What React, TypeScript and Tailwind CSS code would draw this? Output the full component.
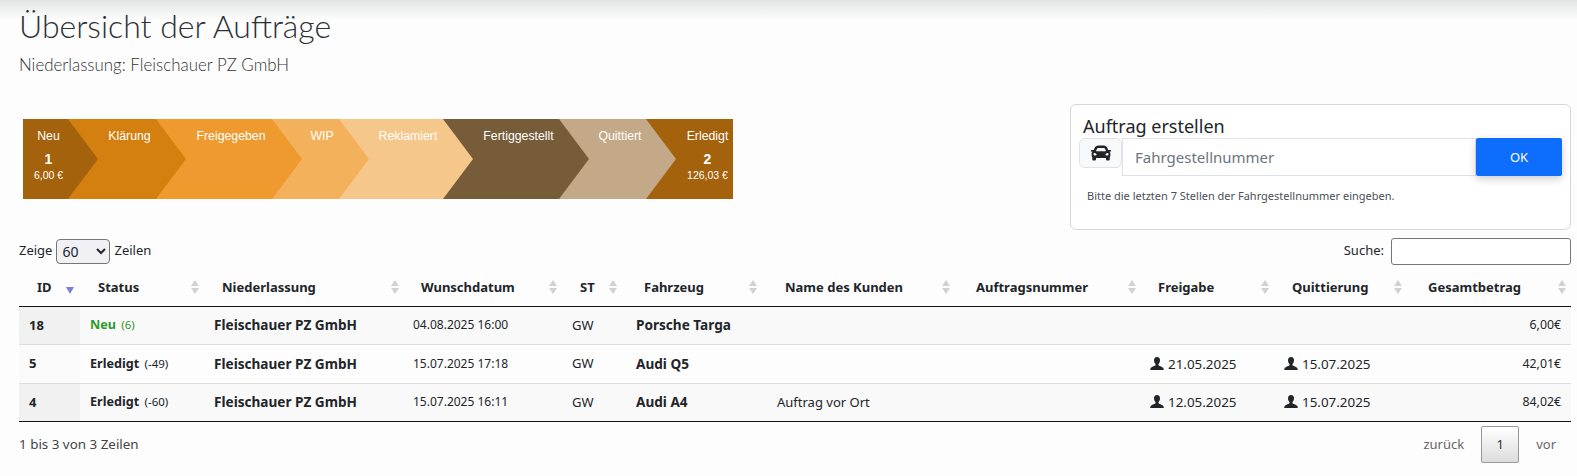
import { FaCar } from "react-icons/fa";

const stages = [
  { label: "Neu", color: "bg-[#a4620c]", box: "w-[45px] pl-[6px]", tip: "bg-[#a4620c]", count: "1", sum: "6,00 €" },
  { label: "Klärung", color: "bg-[#d38010]", box: "w-[88px] pl-[35px]", tip: "bg-[#d38010]" },
  { label: "Freigegeben", color: "bg-[#ee9a2e]", box: "w-[116px] pl-[34px]", tip: "bg-[#ee9a2e]" },
  { label: "WIP", color: "bg-[#f3b15b]", box: "w-[67px] pl-[33px]", tip: "bg-[#f3b15b]" },
  { label: "Reklamiert", color: "bg-[#f5c78a]", box: "w-[104px] pl-[34px]", tip: "bg-[#f5c78a]" },
  { label: "Fertiggestellt", color: "bg-[#775c3a]", box: "w-[116px] pl-[35px]", tip: "bg-[#775c3a]" },
  { label: "Quittiert", color: "bg-[#c3a987]", box: "w-[87px] pl-[35px]", tip: "bg-[#c3a987]" },
  { label: "Erledigt", color: "bg-[#a4620c]", box: "w-[87px] pl-[36px]", count: "2", sum: "126,03 €" },
];

const columns = [
  { label: "ID", width: "w-[61px]", sort: "right-[5px]", active: true },
  { label: "Status", width: "w-[124px]", sort: "right-[4px]" },
  { label: "Niederlassung", width: "w-[199px]", sort: "right-[3px]" },
  { label: "Wunschdatum", width: "w-[159px]", sort: "right-[4px]" },
  { label: "ST", width: "w-[64px]", sort: "right-[8px]" },
  { label: "Fahrzeug", width: "w-[141px]", sort: "right-[9px]" },
  { label: "Name des Kunden", width: "w-[191px]", sort: "right-[7px]" },
  { label: "Auftragsnummer", width: "w-[182px]", sort: "right-[3px]" },
  { label: "Freigabe", width: "w-[134px]", sort: "right-[4px]" },
  { label: "Quittierung", width: "w-[136px]", sort: "right-[7px]" },
  { label: "Gesamtbetrag", width: "w-[161px]", sort: "right-[4px]" },
];

const rows = [
  { id: "18", status: "Neu", days: "(6)", isNew: true, date: "04.08.2025 16:00", car: "Porsche Targa", customer: "", release: "", receipt: "", total: "6,00€", odd: true },
  { id: "5", status: "Erledigt", days: "(-49)", isNew: false, date: "15.07.2025 17:18", car: "Audi Q5", customer: "", release: "21.05.2025", receipt: "15.07.2025", total: "42,01€", odd: false },
  { id: "4", status: "Erledigt", days: "(-60)", isNew: false, date: "15.07.2025 16:11", car: "Audi A4", customer: "Auftrag vor Ort", release: "12.05.2025", receipt: "15.07.2025", total: "84,02€", odd: true },
];

function SortIcon({ active }: { active?: boolean }) {
  if (active) {
    return (
      <svg width="10" height="16" viewBox="0 0 10 16" className="block">
        <path d="M1 8h8l-4 7z" fill="#7b80dd" />
      </svg>
    );
  }
  return (
    <svg width="10" height="16" viewBox="0 0 10 16" className="block">
      <path d="M1 7l4-6 4 6z M1 9h8l-4 6z" fill="#d0d2d4" />
    </svg>
  );
}

function UserIcon() {
  return (
    <svg width="14" height="13" viewBox="0 0 14 13" className="inline-block mr-[4px] align-[-1px]">
      <path
        d="M7 0C5 0 4 1.3 4 3.2c0 1.5.6 3 1.5 3.8v1.2C4 9.3 1.6 9.8.7 11c-.3.4-.4 1-.4 2h13.4c0-1-.1-1.6-.4-2-.9-1.2-3.3-1.7-4.8-2.8V7c.9-.8 1.5-2.3 1.5-3.8C10 1.3 9 0 7 0z"
        fill="#212529"
      />
    </svg>
  );
}

function Pipeline() {
  return (
    <div className="flex ml-[4px] mt-[15px] h-[80px] font-['Liberation_Sans',sans-serif] text-white">
      {stages.map((s) => (
        <div key={s.label} className={`relative shrink-0 h-full ${s.box} ${s.color}`}>
          <div className="flex flex-col items-center whitespace-nowrap">
            <div className="text-[12.3px] leading-[14px] mt-[10px]">{s.label}</div>
            {s.count && <div className="text-[14px] font-bold leading-[16px] mt-[8px]">{s.count}</div>}
            {s.sum && <div className="text-[10.5px] leading-[12px] mt-[2px]">{s.sum}</div>}
          </div>
          {s.tip && (
            <div className={`absolute left-full top-0 z-10 h-full w-[30px] [clip-path:polygon(0_0,100%_50%,0_100%)] ${s.tip}`} />
          )}
        </div>
      ))}
    </div>
  );
}

function CreateCard() {
  return (
    <div className="w-[501px] h-[126px] border border-[#d5d7da] rounded-[6px] bg-white pt-[9px] px-[8px]">
      <div className="ml-[4px] text-[18px] leading-[24px] text-[#212529]">Auftrag erstellen</div>
      <div className="flex items-start">
        <div className="w-[43px] h-[30px] flex items-center justify-center bg-[#f8f9fa] border border-[#dee2e6] rounded-[6px] text-[#212529]">
          <FaCar size={20} />
        </div>
        <div className="w-[354px] h-[38px] flex items-center pl-[12px] pt-[1px] border border-[#dee2e6] bg-white text-[#6c757d] text-[15px]">
          Fahrgestellnummer
        </div>
        <div className="w-[86px] h-[38px] flex items-center justify-center pt-[2px] bg-[#0d6efd] text-white text-[13px] rounded-[2px] shadow-[0_3px_8px_rgba(0,0,0,0.2)]">
          OK
        </div>
      </div>
      <div className="ml-[8px] mt-[12px] text-[11px] leading-[16px] text-[#495057]">
        Bitte die letzten 7 Stellen der Fahrgestellnummer eingeben.
      </div>
    </div>
  );
}

function OrdersTable() {
  return (
    <table className="table-fixed w-[1552px] border-collapse mt-[4px] text-[13px] text-[#212529]">
      <thead>
        <tr className="h-[37px] border-b-[1.5px] border-[#111]">
          {columns.map((c) => (
            <th key={c.label} className={`relative text-left font-bold pl-[18px] ${c.width}`}>
              {c.label}
              <span className={`absolute top-[10px] ${c.sort}`}>
                <SortIcon active={c.active} />
              </span>
            </th>
          ))}
        </tr>
      </thead>
      <tbody>
        {rows.map((r, i) => (
          <tr
            key={r.id}
            className={`h-[38.5px] ${r.odd ? "bg-[#f9f9f9]" : "bg-[#fdfdfd]"} ${i < 2 ? "border-b border-[#ddd]" : "border-b-[1.5px] border-[#111]"}`}
          >
            <td className={`px-[10px] font-bold ${r.odd ? "bg-[#f1f1f1]" : "bg-[#fafafa]"}`}>{r.id}</td>
            <td className={`px-[10px] whitespace-nowrap ${r.isNew ? "text-[#2b9a2b]" : ""}`}>
              <span className="font-bold text-[12.6px]">{r.status}</span>{" "}
              <span className="ml-[2px] text-[11.5px]">{r.days}</span>
            </td>
            <td className="px-[10px] font-bold text-[13.6px]">Fleischauer PZ GmbH</td>
            <td className="px-[10px] text-[12px]">{r.date}</td>
            <td className="px-[10px]">GW</td>
            <td className="px-[10px] font-bold text-[13.6px]">{r.car}</td>
            <td className="px-[10px]">{r.customer}</td>
            <td className="px-[10px]" />
            <td className="px-[10px] whitespace-nowrap text-[13.4px]">
              {r.release && (
                <>
                  <UserIcon />
                  {r.release}
                </>
              )}
            </td>
            <td className="px-[10px] whitespace-nowrap text-[13.4px]">
              {r.receipt && (
                <>
                  <UserIcon />
                  {r.receipt}
                </>
              )}
            </td>
            <td className="px-[10px] text-right text-[12.3px]">{r.total}</td>
          </tr>
        ))}
      </tbody>
    </table>
  );
}

export default function App() {
  return (
    <div className="w-[1577px] h-[476px] overflow-hidden pl-[19px] pr-[6px] bg-[#fdfdfd] bg-[linear-gradient(#e2e4e4,#fdfdfd_20px)] font-['Noto_Sans',sans-serif] text-[#212529]">
      <h1 className="pt-[6px] text-[32px] leading-[40px] font-light text-[#2b3035] font-['Lato',sans-serif]">
        Übersicht der Aufträge
      </h1>
      <p className="mt-[8px] text-[16.9px] leading-[22px] font-light text-[#333] font-['Lato',sans-serif]">
        Niederlassung: Fleischauer PZ GmbH
      </p>

      <div className="flex justify-between mt-[28px]">
        <Pipeline />
        <CreateCard />
      </div>

      <div className="flex justify-between items-center mt-[7px] h-[28px] text-[13px]">
        <div className="flex items-center gap-[4px]">
          Zeige
          <select className="w-[54px] h-[25px] border border-[#767676] rounded-[4px] bg-[#f0f0f5] pl-[1px] text-[14px]" defaultValue="60">
            <option value="60">60</option>
          </select>
          Zeilen
        </div>
        <div className="flex items-center gap-[7px]">
          Suche:
          <input className="w-[180px] h-[27px] border border-[#767676] rounded-[3px] bg-white" />
        </div>
      </div>

      <OrdersTable />

      <div className="flex justify-between items-center mt-[4px] text-[13px]">
        <div className="text-[13.4px] text-[#444]">1 bis 3 von 3 Zeilen</div>
        <div className="flex items-center text-[#666] mr-[15px]">
          <span>zurück</span>
          <span className="mx-[17px] w-[38px] h-[37px] flex items-center justify-center border border-[#979797] rounded-[2px] bg-linear-to-b from-white to-[#dcdcdc] text-[#333]">
            1
          </span>
          <span>vor</span>
        </div>
      </div>
    </div>
  );
}
